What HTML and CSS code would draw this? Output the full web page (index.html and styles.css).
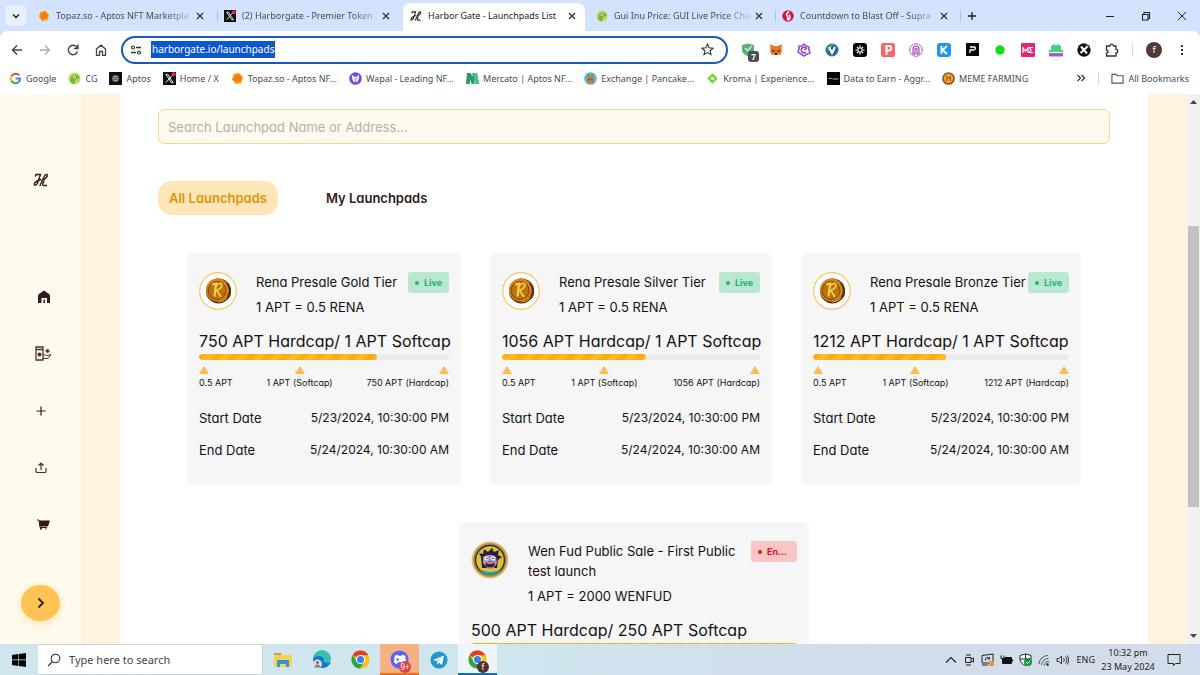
FILE: index.html
```html
<!DOCTYPE html>
<html lang="en">
<head>
<meta charset="utf-8">
<title>Harbor Gate - Launchpads List</title>
<link rel="stylesheet" href="styles.css">
</head>
<body>
<svg class="defs" aria-hidden="true">
  <symbol id="close" viewBox="0 0 10 10"><path d="M2 2l6 6M8 2l-6 6" stroke="#30353f" stroke-width="1.3"/></symbol>
  <symbol id="topaz" viewBox="0 0 14 14"><path d="M3 2l6-1 4 5-2 6-6 1-4-5z" fill="#f9a11b"/><path d="M4 4l4-2 4 4-2 4-5 1-3-3z" fill="#ff7a0a"/></symbol>
  <symbol id="xlogo" viewBox="0 0 14 14"><path d="M0 0h14v14H0z" fill="#0b0b0b"/><path d="M3 2.500h2l6 9H9z" fill="none" stroke="#fff"/><path d="M11 2.500L3 11.500" stroke="#fff"/><circle cx="11.500" cy="2.500" r="2.200" fill="#f1274c"/></symbol>
  <symbol id="gecko" viewBox="0 0 14 14"><circle cx="7" cy="7" r="6.500" fill="#c3dc4a"/><path d="M3 11c-1-5 1-8 5-8 3 0 5 2 4 4-1 1-4 0-4 2l-1 4c-2 0-3-1-4-2z" fill="#6fba3c"/><circle cx="7" cy="5.500" r="1.500" fill="#fff"/><circle cx="7" cy="5.500" r=".7" fill="#333"/></symbol>
  <symbol id="harbor" viewBox="0 0 16 14"><path d="M2.500 3l.5-1.500h4.500L4.500 10c-.8 2.500-3.500 3-3.200 1 .4-2.500 4-3.500 6.200-4.500M7 12.500l4.500-9.500c1-2 3.500-2 2.800 0-.8 2-3 3.500-5.300 4M11 8l-1.300 3c-.4 1.300.3 1.500 1.300 1.500h2.500" fill="none" stroke="#321a1a" stroke-width="1.400" stroke-linecap="round"/></symbol>
  <symbol id="chrome" viewBox="0 0 20 20"><circle cx="10" cy="10" r="9.500" fill="#fbc116"/><path d="M10 10L1.800 5.200A9.500 9.500 0 0 1 18.300 5.500H10z" fill="#e33b2e"/><path d="M1.800 5.200A9.500 9.500 0 0 0 9.500 19.500L14 12 10 10 6 12z" fill="#2da44e"/><circle cx="10" cy="10" r="4.800" fill="#fff"/><circle cx="10" cy="10" r="3.700" fill="#3b7de9"/></symbol>
  <symbol id="coin" viewBox="0 0 38 38"><circle cx="19" cy="19" r="18.300" fill="#fff" stroke="#fbc362" stroke-width="1.200"/><circle cx="19.500" cy="19" r="12.500" fill="#4c230c"/><circle cx="18.500" cy="18" r="11.500" fill="#d98512"/><path d="M28 10a12.500 12.500 0 0 1-8 20.500l-3-1A12 12 0 0 0 28 10z" fill="#f3b62c"/><path d="M28 11a12.500 12.500 0 0 1 1 15" fill="none" stroke="#5a2a0c" stroke-width="2"/><circle cx="18" cy="18.500" r="9" fill="#b8740f" stroke="#7d430c"/><path d="M13 12.500l4-1-1.500 13" fill="none" stroke="#f9cb4c" stroke-width="2.200"/><path d="M17 14c2-3 6-3.500 6-1 0 3-3.500 5-5.500 5.200L22 25" fill="none" stroke="#f9cb4c" stroke-width="1.800"/></symbol>
  <symbol id="tri" viewBox="0 0 10 8"><path d="M5 0L10 8H0z" fill="#fbbc55"/></symbol>
</svg>

<header class="browser">
  <div class="tabstrip">
    <button class="tabsearch" aria-label="Search tabs"><svg width="10" height="10" viewBox="0 0 10 10"><path d="M2 3.500L5 6.500 8 3.500" fill="none" stroke="#202124" stroke-width="1.500"/></svg></button>
    <div class="tab"><svg class="fav"><use href="#topaz"/></svg><span class="tabtitle">Topaz.so - Aptos NFT Marketpla</span><button class="close" aria-label="Close tab"><svg><use href="#close"/></svg></button></div>
    <div class="tab ruled"><svg class="fav"><use href="#xlogo"/></svg><span class="tabtitle">(2) Harborgate - Premier Token</span><button class="close" aria-label="Close tab"><svg><use href="#close"/></svg></button></div>
    <div class="tab active"><svg class="fav"><use href="#harbor"/></svg><span class="tabtitle">Harbor Gate - Launchpads List</span><button class="close" aria-label="Close tab"><svg><use href="#close"/></svg></button></div>
    <div class="tab"><svg class="fav"><use href="#gecko"/></svg><span class="tabtitle">Gui Inu Price: GUI Live Price Cha</span><button class="close" aria-label="Close tab"><svg><use href="#close"/></svg></button></div>
    <div class="tab ruled"><svg class="fav" viewBox="0 0 14 14"><circle cx="7" cy="7" r="6.700" fill="#d81440"/><path d="M8.500 2C5 3 4.500 6 6.500 7.500c1 1 .5 2.500-.5 4M7 12c3-2 3-5 1-6.500" fill="none" stroke="#fff" stroke-width="1.800"/></svg><span class="tabtitle">Countdown to Blast Off - Supra</span><button class="close" aria-label="Close tab"><svg><use href="#close"/></svg></button></div>
    <button class="newtab" aria-label="New tab"><svg width="10" height="10" viewBox="0 0 10 10"><path d="M5 1v8M1 5h8" stroke="#202124" stroke-width="1.300"/></svg></button>
    <div class="winbtns">
      <button aria-label="Minimize"><svg width="10" height="10" viewBox="0 0 10 10"><path d="M1 5.500h8" stroke="#222"/></svg></button>
      <button aria-label="Restore"><svg width="10" height="10" viewBox="0 0 10 10"><path d="M1.500 3.500h5.500v5.500H1.500zM3 3V1.500h5.500V7.500H7.500" fill="none" stroke="#222" stroke-width="1.100"/></svg></button>
      <button aria-label="Close"><svg width="10" height="10" viewBox="0 0 10 10"><path d="M1 1l8 8M9 1L1 9" stroke="#222"/></svg></button>
    </div>
  </div>

  <div class="toolbar">
    <button class="cell" aria-label="Back"><svg width="12" height="12" viewBox="0 0 12 12"><path d="M11 6H2M6 1.500L1.500 6 6 10.500" fill="none" stroke="#444" stroke-width="1.400"/></svg></button>
    <button class="cell" aria-label="Forward"><svg width="12" height="12" viewBox="0 0 12 12"><path d="M1 6h9M6 1.500L10.500 6 6 10.500" fill="none" stroke="#aaa" stroke-width="1.300"/></svg></button>
    <button class="cell" aria-label="Reload"><svg width="12" height="12" viewBox="0 0 12 12"><path d="M10.500 7.500A4.700 4.700 0 1 1 9.500 2.800L11 4.500M11 .5v4H7" fill="none" stroke="#444" stroke-width="1.400"/></svg></button>
    <button class="cell" aria-label="Home"><svg width="12" height="12" viewBox="0 0 12 12"><path d="M1.500 5L6 1.200 10.500 5v6.300H7.500V7.500h-3v3.800h-3z" fill="none" stroke="#444" stroke-width="1.300"/></svg></button>
    <div class="omnibox">
      <svg width="12" height="12" viewBox="0 0 12 12"><path d="M6 3.500h5M1 8.500h5" stroke="#333" stroke-width="1.400"/><circle cx="3" cy="3.500" r="1.500" fill="none" stroke="#333" stroke-width="1.200"/><circle cx="9" cy="8.500" r="1.500" fill="none" stroke="#333" stroke-width="1.200"/></svg>
      <span class="url">harborgate.io/launchpads</span>
      <button class="star" aria-label="Bookmark this tab"><svg width="13" height="13" viewBox="0 0 13 13"><path d="M6.500 1.200l1.600 3.600 4 .4-3 2.600.9 3.900-3.500-2.100L3 11.700l.9-3.900-3-2.600 4-.4z" fill="none" stroke="#333" stroke-width="1.100"/></svg></button>
    </div>
    <div class="exts">
      <span class="cell ext-shield"><svg width="14" height="14" viewBox="0 0 14 14"><path d="M1 2l6-1.500L13 2v5c0 3-3 5-6 6.500C4 12 1 10 1 7z" fill="#5bb274"/><path d="M4 5l2.500 2.500L11 3" fill="none" stroke="#d8f0df" stroke-width="1.300"/></svg><b class="count">7</b></span>
      <span class="cell"><svg width="14" height="13" viewBox="0 0 14 13"><path d="M1 1l4 2h4l4-2-.5 5 .5 3-2 3-3-1H6l-3 1-2-3 .5-3z" fill="#e8792b"/><path d="M3 6l3 2v1L3 8zM11 6L8 8v1l3-1z" fill="#5f3316"/><path d="M5.500 10h3v2h-3z" fill="#4a3226"/></svg></span>
      <span class="cell"><svg width="14" height="14" viewBox="0 0 14 14"><path d="M7 1l2 2 3 1v3l1 3-3 1-3 2-3-2-3-2 1-3V3l3 0z" fill="none" stroke="#a04fdc" stroke-width="1.700"/><path d="M9 9a2.800 2.800 0 1 1 .5-3.500L7 7" fill="none" stroke="#8b35d0" stroke-width="1.400"/></svg></span>
      <span class="cell"><svg width="14" height="14" viewBox="0 0 14 14"><circle cx="7" cy="7" r="6.500" fill="#2c6c9a"/><path d="M3 9a6 6 0 0 1 1-7 7 7 0 0 1 5-1z" fill="#489c75"/><path d="M4 4l3 6 3-6" fill="none" stroke="#fff" stroke-width="2"/></svg></span>
      <span class="cell"><svg width="14" height="14" viewBox="0 0 14 14"><rect width="14" height="14" rx="3" fill="#090909"/><path d="M7 2.500v9M2.500 7h9M4 4l6 6M10 4l-6 6" stroke="#fff" stroke-width="1.200"/><circle cx="7" cy="7" r="2" fill="#090909" stroke="#fff" stroke-width=".8"/></svg></span>
      <span class="cell"><svg width="14" height="14" viewBox="0 0 14 14"><rect width="14" height="14" rx="2" fill="#fa646b"/><path d="M5.500 12V3h2.500a2.300 2.300 0 0 1 0 4.600H6" fill="none" stroke="#fff" stroke-width="2"/></svg></span>
      <span class="cell"><svg width="14" height="14" viewBox="0 0 14 14"><circle cx="7" cy="7" r="6.300" fill="#fff" stroke="#b55ac2"/><path d="M4 11V6a3 3 0 0 1 6 0v5H8V6a1 1 0 0 0-2 0v5z" fill="none" stroke="#9b3ba9" stroke-width="1.100"/></svg></span>
      <span class="cell"><svg width="14" height="14" viewBox="0 0 14 14"><rect width="14" height="14" rx="3" fill="#2194ef"/><path d="M4.500 3v8M10 3L5.500 7 10 11" fill="none" stroke="#fff" stroke-width="1.900"/></svg></span>
      <span class="cell"><svg width="13" height="13" viewBox="0 0 13 13"><path d="M0 0h13v13H0z" fill="#050505"/><path d="M4 10V7h3.500C10 7 10 4 8 4H4" fill="none" stroke="#fff" stroke-width="1.300"/></svg></span>
      <span class="cell"><svg width="10" height="10" viewBox="0 0 10 10"><circle cx="5" cy="5" r="4.700" fill="#11dd16"/></svg></span>
      <span class="cell"><svg width="14" height="14" viewBox="0 0 14 14"><rect width="14" height="14" rx="1" fill="#e42575"/><path d="M2 10V5l2.500 3L7 5v5M12 4.500H8.500L10 7 8.500 9.500H12" fill="none" stroke="#fff" stroke-width="1.200"/></svg></span>
      <span class="cell"><svg width="14" height="14" viewBox="0 0 14 14"><path d="M2 8V4l1.500-2.500h2L7 2.500l1.500-1h2L12 4v4z" fill="#45d27d"/><path d="M0 7h14v2H0z" fill="#45d27d"/><rect y="10" width="14" height="3.500" rx="1" fill="#9d5bd2"/></svg></span>
      <span class="cell"><svg width="14" height="14" viewBox="0 0 14 14"><circle cx="7" cy="7" r="6.700" fill="#111"/><path d="M4 3.500l6 7M10.500 3.500L3.500 10" stroke="#fff" stroke-width="2"/><path d="M9 1.500l3 3" stroke="#e8a15a"/></svg></span>
      <button class="cell" aria-label="Extensions"><svg width="14" height="14" viewBox="0 0 14 14"><path d="M1.500 3H5c0-2.500 3.500-2.500 3.500 0H11v3.500c2.500 0 2.500 3.500 0 3.500v3H1.500v-3c2 0 2-3 0-3z" fill="none" stroke="#333" stroke-width="1.300"/></svg></button>
    </div>
    <span class="rule"></span>
    <button class="cell" aria-label="Profile"><span class="profile">f</span></button>
    <button class="cell" aria-label="Menu"><svg width="4" height="12" viewBox="0 0 4 12"><path d="M1 1h2v2H1zM1 5h2v2H1zM1 9h2v2H1z" fill="#333"/></svg></button>
  </div>

  <nav class="bookmarks" aria-label="Bookmarks">
    <a href="#"><svg viewBox="0 0 14 14"><path d="M11 3.700A5 5 0 0 0 2.700 4.500" fill="none" stroke="#e94436" stroke-width="2.200"/><path d="M2.700 4.500a5 5 0 0 0 0 5" fill="none" stroke="#f8bb15" stroke-width="2.200"/><path d="M2.700 9.500a5 5 0 0 0 7.500 1.500" fill="none" stroke="#34a454" stroke-width="2.200"/><path d="M10.200 11A5 5 0 0 0 12 7H7" fill="none" stroke="#4285f4" stroke-width="2.200"/></svg>Google</a>
    <a href="#"><svg><use href="#gecko"/></svg>CG</a>
    <a href="#"><svg viewBox="0 0 14 14"><path d="M0 0h14v14H0z" fill="#111"/><circle cx="7" cy="7" r="3.500" fill="#999"/><path d="M4 6h6M4 8h6" stroke="#555"/></svg>Aptos</a>
    <a href="#"><svg><use href="#xlogo"/></svg>Home / X</a>
    <a href="#"><svg><use href="#topaz"/></svg>Topaz.so - Aptos NF...</a>
    <a href="#"><svg viewBox="0 0 14 14"><circle cx="7" cy="7" r="6.800" fill="#744be2"/><path d="M3 3l2.500 2h3L11 3l-.5 4.500L8.500 11.500 7 9l-1.500 2.500-2-4z" fill="#fff"/><path d="M5.500 6.500L7 8l1.500-1.500" fill="none" stroke="#744be2"/></svg>Wapal - Leading NF...</a>
    <a href="#"><svg viewBox="0 0 14 14"><path d="M1 1h4l2 4V1h5l2 12h-4L9 8v5H6L4.500 8 4 13H0z" fill="#2a9d63"/><path d="M8 1h4l2 12h-4z" fill="#4cc38a"/></svg>Mercato | Aptos NF...</a>
    <a href="#"><svg viewBox="0 0 14 14"><circle cx="7" cy="7" r="6.800" fill="#4bc3d4"/><path d="M4 6V2h2v3h2V2h2v4l1 2-1 4H4L3 8z" fill="#c47440"/><path d="M5 8h1M8 8h1" stroke="#522"/></svg>Exchange | Pancake...</a>
    <a href="#"><svg viewBox="0 0 14 14"><path d="M7 3l4 4-4 4-4-4z" fill="none" stroke="#72d82c" stroke-width="2.600" stroke-linejoin="round"/></svg>Kroma | Experience...</a>
    <a href="#"><svg viewBox="0 0 14 14"><path d="M0 0h14v14H0z" fill="#050505"/><path d="M2 7h3M6 7.500h6" stroke="#ccc"/></svg>Data to Earn - Aggr...</a>
    <a href="#"><svg viewBox="0 0 14 14"><circle cx="7" cy="7" r="6.800" fill="#8c5320"/><circle cx="7" cy="7" r="5" fill="#f3a92b"/><path d="M5 10V5l2 2 2-2v5" fill="none" stroke="#a4601c" stroke-width="1.200"/></svg>MEME FARMING</a>
    <button class="more" aria-label="More bookmarks"><svg viewBox="0 0 10 10"><path d="M1.500 2l3 3-3 3M5.500 2l3 3-3 3" fill="none" stroke="#333" stroke-width="1.300"/></svg></button>
    <span class="rule"></span>
    <a href="#"><svg viewBox="0 0 14 14"><path d="M1 2.500h4.500L7 4h6v8H1z" fill="none" stroke="#555" stroke-width="1.200"/></svg>All Bookmarks</a>
  </nav>
</header>

<div class="viewport">
  <aside class="sidebar">
    <a class="brand" href="#" aria-label="Harbor Gate"><svg width="16" height="14"><use href="#harbor"/></svg></a>
    <nav class="sidenav" aria-label="Main">
      <a class="inset" href="#" aria-label="Home"><svg width="12" height="13" viewBox="0 0 12 13"><path d="M0 5.500Q0 4.500 1 4l5-3.500L11 4q1 .5 1 1.500V13H9V8H3.500v5H0z" fill="#321a1a"/><path d="M5.500 9.500h1.500v3.500H5.500z" fill="#321a1a"/></svg></a>
      <a class="inset" href="#" aria-label="Launchpad"><svg width="17" height="15" viewBox="0 0 17 15"><path d="M1 1h7v13H1zM1 3.500h7" fill="none" stroke="#4a3630" stroke-width="1.300"/><circle cx="4.500" cy="8.500" r="2" fill="#4a3630"/><circle cx="12.500" cy="5" r="2" fill="#4a3630" stroke="#b9aca2"/><path d="M8 9.500c3-2 3 1 5 0l3-1-3 4H8" fill="none" stroke="#4a3630"/></svg></a>
      <a href="#" aria-label="Create"><svg width="10" height="10" viewBox="0 0 10 10"><path d="M5 .5v9M.5 5h9" stroke="#321a1a" stroke-width="1.200"/></svg></a>
      <a href="#" aria-label="Upload"><svg width="12" height="12" viewBox="0 0 12 12"><path d="M1 6v3.500q0 1 1 1h8q1 0 1-1V6M6 8V1M3.500 3.500L6 1l2.500 2.500" fill="none" stroke="#4d302b" stroke-width="1.200"/></svg></a>
      <a class="inset" href="#" aria-label="Market"><svg width="13" height="11" viewBox="0 0 13 11"><path d="M0 1h2l1 7.500h7" fill="none" stroke="#321a1a"/><path d="M2 1.500h11L11 7.500H3z" fill="#321a1a"/><circle cx="4" cy="9.800" r="1" fill="#321a1a"/><circle cx="9" cy="9.800" r="1" fill="#9a8b84"/></svg></a>
    </nav>
    <button class="expand" aria-label="Expand menu"><svg width="8" height="12" viewBox="0 0 8 12"><path d="M1.500 1.500L6 6l-4.500 4.500" fill="none" stroke="#321a1a" stroke-width="1.800"/></svg></button>
  </aside>

  <main class="page">
    <input class="search" type="text" aria-label="Search launchpads" placeholder="Search Launchpad Name or Address...">
    <div class="filters">
      <button class="filter on">All Launchpads</button>
      <button class="filter">My Launchpads</button>
    </div>
    <div class="cards">
      <article class="card gold">
        <div class="head"><svg class="token"><use href="#coin"/></svg><div class="names"><h2>Rena Presale Gold Tier</h2><p>1 APT = 0.5 RENA</p></div><span class="badge live">Live</span></div>
        <h3>750 APT Hardcap/ 1 APT Softcap</h3>
        <div class="bar"><div class="fill" style="width:71%"></div></div>
        <div class="marks"><span><svg><use href="#tri"/></svg>0.5 APT</span><span><svg><use href="#tri"/></svg>1 APT (Softcap)</span><span><svg><use href="#tri"/></svg>750 APT (Hardcap)</span></div>
        <dl><div><dt>Start Date</dt><dd>5/23/2024, 10:30:00 PM</dd></div><div><dt>End Date</dt><dd>5/24/2024, 10:30:00 AM</dd></div></dl>
      </article>
      <article class="card silver">
        <div class="head"><svg class="token"><use href="#coin"/></svg><div class="names"><h2>Rena Presale Silver Tier</h2><p>1 APT = 0.5 RENA</p></div><span class="badge live">Live</span></div>
        <h3>1056 APT Hardcap/ 1 APT Softcap</h3>
        <div class="bar"><div class="fill" style="width:56%"></div></div>
        <div class="marks"><span><svg><use href="#tri"/></svg>0.5 APT</span><span><svg><use href="#tri"/></svg>1 APT (Softcap)</span><span><svg><use href="#tri"/></svg>1056 APT (Hardcap)</span></div>
        <dl><div><dt>Start Date</dt><dd>5/23/2024, 10:30:00 PM</dd></div><div><dt>End Date</dt><dd>5/24/2024, 10:30:00 AM</dd></div></dl>
      </article>
      <article class="card bronze">
        <div class="head"><svg class="token"><use href="#coin"/></svg><div class="names"><h2>Rena Presale Bronze Tier</h2><p>1 APT = 0.5 RENA</p></div><span class="badge live">Live</span></div>
        <h3>1212 APT Hardcap/ 1 APT Softcap</h3>
        <div class="bar"><div class="fill" style="width:52%"></div></div>
        <div class="marks"><span><svg><use href="#tri"/></svg>0.5 APT</span><span><svg><use href="#tri"/></svg>1 APT (Softcap)</span><span><svg><use href="#tri"/></svg>1212 APT (Hardcap)</span></div>
        <dl><div><dt>Start Date</dt><dd>5/23/2024, 10:30:00 PM</dd></div><div><dt>End Date</dt><dd>5/24/2024, 10:30:00 AM</dd></div></dl>
      </article>
      <article class="card wide">
        <div class="head"><svg class="token" viewBox="0 0 38 38"><circle cx="19" cy="19" r="18.500" fill="#f0be68"/><circle cx="19" cy="19" r="17" fill="#b98a5e"/><circle cx="19" cy="19" r="14.500" fill="#e2c130" stroke="#1d3a38" stroke-width="1.500"/><path d="M10 16l-2-4 4 1 1-5 4 3 4-4 2 4 5-2-1 5 4 2-4 3-1 8H11z" fill="#28203c"/><path d="M12 16c4-3 10-3 13 0l1 6-4 6h-5l-5-6z" fill="#a893c4"/><circle cx="15.500" cy="17.500" r="2" fill="#fff"/><circle cx="22" cy="17.500" r="2" fill="#fff"/><circle cx="16" cy="17.500" r=".8" fill="#111"/><circle cx="22" cy="17.500" r=".8" fill="#111"/><ellipse cx="19" cy="23.500" rx="4.500" ry="3" fill="#4a1630"/><path d="M16 22h6" stroke="#fff"/><path d="M8 28c7 4 15 4 22 0l-2 3c-5 4-13 4-18 0z" fill="#2d9f92"/></svg><div class="names"><h2>Wen Fud Public Sale - First Public test launch</h2><p>1 APT = 2000 WENFUD</p></div><span class="badge ended">En...</span></div>
        <h3>500 APT Hardcap/ 250 APT Softcap</h3>
        <div class="bar"><div class="fill" style="width:100%"></div></div>
      </article>
    </div>
  </main>

  <div class="scroll" aria-hidden="true">
    <svg width="7" height="5" viewBox="0 0 7 5"><path d="M3.500 1L7 5H0z" fill="#444"/></svg>
    <div class="thumb"></div>
    <svg class="down" width="7" height="5" viewBox="0 0 7 5"><path d="M0 0h7L3.500 4z" fill="#444"/></svg>
  </div>
</div>

<footer class="taskbar">
  <button class="start" aria-label="Start"><svg width="14" height="14" viewBox="0 0 14 14"><path d="M0 2l6-1v5.600H0zM6.600 1L14 0v6.600H6.600zM0 7.300h6V13l-6-1zM6.600 7.300H14V14l-7.400-1z" fill="#050505"/></svg></button>
  <label class="find"><svg width="14" height="14" viewBox="0 0 14 14"><circle cx="8.500" cy="5.500" r="4.300" fill="none" stroke="#333" stroke-width="1.100"/><path d="M5.500 8.500L1 13" stroke="#333" stroke-width="1.100"/></svg><input type="text" aria-label="Search" placeholder="Type here to search"></label>
  <div class="apps">
    <button aria-label="File Explorer"><svg width="18" height="16" viewBox="0 0 18 16"><path d="M0 1h7l1 2h10v12H0z" fill="#f8d158"/><path d="M0 1h7v2H0z" fill="#d9a02a"/><path d="M3 8h12v7h-3v-3H6v3H3z" fill="#3b91d6"/></svg></button>
    <button aria-label="Edge"><svg width="20" height="19" viewBox="0 0 20 19"><path d="M1 9a9 9 0 0 1 18 0c0 3-3 4-5 4s-3-1-2-2c1-3-2-4-4-4-4 0-6 2-7 2z" fill="#35c1b0"/><path d="M1 9c2-4 10-4 11 0-1 3 1 5 7 3-2 5-6 6-10 6-5 0-8-4-8-9z" fill="#1478c8"/><circle cx="5.500" cy="14" r="4.500" fill="#d7dfe3"/><circle cx="5.500" cy="12.500" r="1.600" fill="#a2674f"/><path d="M2.500 17.500c.5-4 5.500-4 6 0z" fill="#77818a"/></svg></button>
    <button aria-label="Chrome"><svg width="19" height="19"><use href="#chrome"/></svg></button>
    <button class="alert" aria-label="Discord"><svg width="19" height="19" viewBox="0 0 20 20"><circle cx="10" cy="10" r="9.500" fill="#5865f2"/><path d="M5 6l3-1 1 1h3l1-1 3 1 1 7-3 2-1-2H8l-1 2-3-2z" fill="#fff"/><circle cx="8" cy="10" r="1.300" fill="#5865f2"/></svg><span class="unread">9+</span></button>
    <button aria-label="Telegram"><svg width="18" height="18" viewBox="0 0 20 20"><circle cx="10" cy="10" r="9.500" fill="#1f97cf"/><path d="M3.500 10l12-5-2 10.500-3.500-2.500-2 2v-3.500l5-4.500-6 4z" fill="#fff"/></svg></button>
    <button class="current" aria-label="Chrome, profile f"><svg width="19" height="19"><use href="#chrome"/></svg><span class="who">f</span></button>
  </div>
  <div class="tray">
    <svg width="12" height="12" viewBox="0 0 12 12"><path d="M1 8.500l5-5 5 5" fill="none" stroke="#222" stroke-width="1.100"/></svg>
    <svg width="12" height="12" viewBox="0 0 12 12"><path d="M2.500 3.500h5.500v5H2.500zM8 5l2.500-1v4L8 7M3 1h5M3 11h5" fill="none" stroke="#222"/></svg>
    <svg width="13" height="13" viewBox="0 0 13 13"><path d="M1 2.500l11-1.500v9H1zM1 12h6" fill="none" stroke="#222"/><path d="M4.500 7.500a2 2 0 0 1 3.500-2M8.500 4v2h-2" fill="none" stroke="#222"/><path d="M8 8h5v5H8z" fill="#ef9526"/></svg>
    <svg width="13" height="12" viewBox="0 0 13 12"><path d="M3 4h8v5H3z" fill="#111"/><path d="M2.500 5v4.500h9V3.500H5M12.500 5.500v2M1 1.500v3h3v-3M2.500 4v2" stroke="#111" fill="none"/></svg>
    <svg width="13" height="13" viewBox="0 0 13 13"><path d="M6.500 1L12 2.500v4c0 3-3 5-5.500 6C4 11.500 1 9.500 1 6.500v-4z" fill="#fff" stroke="#222"/><path d="M6.500 1v11M1 6h11" stroke="#222"/><circle cx="9" cy="9" r="4" fill="#159947"/><path d="M7 9l1.500 1.500L11 8" fill="none" stroke="#fff"/></svg>
    <svg width="12" height="12" viewBox="0 0 12 12"><path d="M1 10A9 9 0 0 1 10 1.500M3.500 11A7 7 0 0 1 10.500 4.500M6 11.500a5 5 0 0 1 5-4" fill="none" stroke="#555"/><circle cx="9.500" cy="10.500" r="1.200" fill="#222"/></svg>
    <svg width="13" height="12" viewBox="0 0 13 12"><path d="M1 4.500h2L5.500 2v8L3 7.500H1zM7.500 4a3 3 0 0 1 0 4M9.500 2.500a5 5 0 0 1 0 7M11.200 1.500a7 7 0 0 1 0 9" fill="none" stroke="#333"/></svg>
    <span class="lang">ENG</span>
    <time class="clock"><span>10:32 pm</span><span>23 May 2024</span></time>
    <svg class="note" width="14" height="14" viewBox="0 0 14 14"><path d="M1 1.500h12v9H8.500L6.500 12.500v-2H1z" fill="none" stroke="#222"/></svg>
  </div>
</footer>
</body>
</html>
```
FILE: styles.css
```css
* { box-sizing: border-box; }
body {
  margin: 0;
  height: 100vh;
  display: flex;
  flex-direction: column;
  overflow: hidden;
  background: #fff;
  color: #111;
  font-family: "Noto Sans", sans-serif;
  font-size: 9px;
}
button { border: 0; padding: 0; margin: 0; background: none; font: inherit; color: inherit; }
a { color: inherit; text-decoration: none; }
svg { display: block; flex: none; }
h2, h3, p, dl, dd { margin: 0; font-weight: 400; }
.defs { position: absolute; width: 0; height: 0; }

/* Browser frame */
.browser { flex: none; height: 94px; background: #d3e2fd; }
.tabstrip { display: flex; align-items: center; height: 31px; padding-left: 5px; }
.tabsearch { width: 22px; height: 21px; margin-right: 4px; border-radius: 6px; background: #e8f0fe; display: grid; place-items: center; }
.tab { display: flex; align-items: center; flex: 0 1 186px; min-width: 0; height: 26px; padding: 0 12px 0 7px; color: #454c5a; }
.ruled { background: linear-gradient(#a9c4f5, #a9c4f5) 0 center / 1px 12px no-repeat, linear-gradient(#a9c4f5, #a9c4f5) right center / 1px 12px no-repeat; }
.tab:nth-child(3) { background-size: 1px 12px, 0 0; }
.active { flex-basis: 182px; margin-right: 4px; padding-right: 8px; background: #fff; border-radius: 8px 8px 0 0; color: #222; box-shadow: 0 3px #fff; }
.fav { width: 12px; height: 12px; margin-right: 6px; }
.tabtitle { flex: 1; white-space: nowrap; margin-right: 4px; }
.tab:not(.active) .tabtitle { mask-image: linear-gradient(90deg, #000 110px, transparent 140px); }
.close svg { width: 10px; height: 10px; }
.newtab { width: 22px; height: 22px; display: grid; place-items: center; }
.winbtns { display: flex; margin-left: auto; }
.winbtns button { width: 36px; height: 30px; display: grid; place-items: center; }

.toolbar { display: flex; align-items: center; height: 37px; padding: 0 4px 0 3px; background: #fff; border-radius: 8px 8px 0 0; }
.cell { width: 28px; height: 28px; display: grid; place-items: center; flex: none; }
.omnibox { flex: 1; display: flex; align-items: center; gap: 9px; height: 28px; margin: 0 6px; padding: 0 12px 0 7px; border: 2px solid #1b57c0; border-radius: 14px; }
.url { padding: 0 1px; background: #0b57d0; color: #fff; font-size: 10px; line-height: 17px; }
.star { margin-left: auto; }
.exts { display: flex; }
.ext-shield { position: relative; }
.count { position: absolute; right: 3px; bottom: 2px; width: 11px; height: 11px; border-radius: 3px; background: #4b4f54; color: #fff; font-size: 8px; line-height: 11px; text-align: center; }
.rule { width: 1px; height: 13px; margin: 0 7px 0 6px; background: #c9dafa; }
.profile { width: 16px; height: 16px; border-radius: 50%; background: #523b34; color: #fff; line-height: 16px; text-align: center; }

.bookmarks { display: flex; align-items: center; gap: 12px; height: 26px; padding: 0 11px 6px 9px; background: #fff; color: #484c52; white-space: nowrap; }
.bookmarks a { display: flex; align-items: center; gap: 4px; }
.bookmarks a svg { width: 13px; height: 13px; }
.bookmarks .rule { margin: 0; }
.more { margin-left: auto; }
.more svg { width: 10px; height: 10px; }

/* Launchpad site */
.viewport { flex: 1; min-height: 0; display: flex; background: #fff2de; font-family: Inter, sans-serif; font-feature-settings: "cv11"; overflow: hidden; }
.sidebar { flex: none; width: 81px; display: flex; flex-direction: column; align-items: center; padding-top: 79px; background: #fffaed; }
.brand { margin-bottom: 81px; }
.sidenav { display: flex; flex-direction: column; }
.sidenav a { height: 57px; display: grid; place-items: center; }
.sidenav .inset { padding-left: 6px; }
.expand { flex: none; width: 39px; height: 36px; margin-top: 32px; border-radius: 50%; background: #fdc455; box-shadow: 0 2px 8px #fde0a6; display: grid; place-items: center; }

.page { flex: 1; min-width: 0; margin: 0 39px; padding: 15px 38px 0; background: #fff; }
.search { display: block; width: 100%; height: 35px; padding: 0 9px; border: 1px solid #f5d797; border-radius: 6px; background: #fffaed; font: inherit; font-size: 13px; outline: 0; }
.search::placeholder { color: #b4b0aa; opacity: 1; }
.filters { display: flex; gap: 37px; margin: 37px 0 38px; }
.filter { height: 34px; padding: 0 11px; border-radius: 14px; font-size: 13px; font-weight: 600; color: #321a1a; }
.filter.on { background: #fee6b8; color: #dd950d; }
.cards { display: flex; flex-wrap: wrap; justify-content: center; align-items: flex-start; gap: 37px 29px; }
.card { padding: 19px 12px; border-radius: 6px; background: #f6f6f6; white-space: nowrap; }
.gold { width: 274px; }
.silver { width: 282px; }
.bronze { width: 280px; }
.wide { width: 350px; }
.head { display: flex; align-items: flex-start; }
.token { width: 38px; height: 38px; margin-right: 19px; }
.names { flex: 1; min-width: 0; display: grid; gap: 5px; font-size: 13px; line-height: 20px; }
.names h2 { font-size: 13px; }
.wide h2 { white-space: normal; }
.badge { display: flex; align-items: center; gap: 5px; height: 21px; padding: 0 7px; border-radius: 3px; font-size: 9px; font-weight: 700; }
.badge::before { content: ""; width: 4px; height: 4px; border-radius: 50%; background: currentColor; }
.live { background: #bae7d0; color: #22b573; }
.ended { width: 46px; background: #fac5c5; color: #e80d18; }
h3 { margin-top: 11px; font-size: 16px; line-height: 26px; }
.bar { height: 6px; border-radius: 3px; background: #e9ecef; overflow: hidden; }
.fill { height: 100%; border-radius: 3px; background: repeating-linear-gradient(135deg, #fbad0e 0 6px, #fbb930 6px 12px); }
.marks { display: flex; justify-content: space-between; margin-top: 6px; font-size: 9px; line-height: 18px; }
.marks span { display: grid; justify-items: center; }
.marks span:first-child { justify-items: start; }
.marks span:last-child { justify-items: end; }
.marks svg { width: 10px; height: 8px; }
dl { margin-top: 10px; font-size: 13px; }
dl div { display: flex; justify-content: space-between; line-height: 32px; }
dd { font-size: 12px; }

.scroll { flex: none; width: 13px; display: flex; flex-direction: column; align-items: center; padding: 5px 0; background: #f1f1f1; }
.thumb { width: 11px; height: 52%; margin-top: 122px; background: #c1c1c1; }
.down { margin-top: auto; }

/* Taskbar */
.taskbar { flex: none; height: 31px; display: flex; background: linear-gradient(90deg, #cfe6ef 40%, #d3dceb 75%); color: #222; }
.start { width: 38px; display: grid; place-items: center; }
.find { width: 225px; display: flex; align-items: center; gap: 8px; padding-left: 9px; background: #fff; border: 1px solid #ccd3d6; border-width: 1px 1px 1px 0; }
.find input { width: 150px; border: 0; padding: 0; outline: 0; background: none; font: inherit; font-size: 11px; }
.find input::placeholder { color: #444; opacity: 1; }
.apps { display: flex; }
.apps button { position: relative; width: 39px; display: grid; place-items: center; border-bottom: 2px solid transparent; border-top: 2px solid transparent; }
.apps .alert { background: #f5b183; border-color: #f5b183 transparent #ee6b1d; }
.apps .current { background: #edf5f9; border-color: #edf5f9 transparent #1769b5; }
.unread, .who { position: absolute; right: 8px; bottom: 0; border-radius: 6px; color: #fff; font-size: 8px; line-height: 12px; width: 12px; text-align: center; }
.unread { background: #e0404a; }
.who { background: #4d352b; }
.tray { display: flex; align-items: center; gap: 6px; margin-left: auto; padding-right: 19px; }
.lang { margin-left: 2px; }
.clock { width: 54px; display: grid; justify-content: center; text-align: center; line-height: 14px; white-space: nowrap; }
.note { margin-left: 6px; }
```
